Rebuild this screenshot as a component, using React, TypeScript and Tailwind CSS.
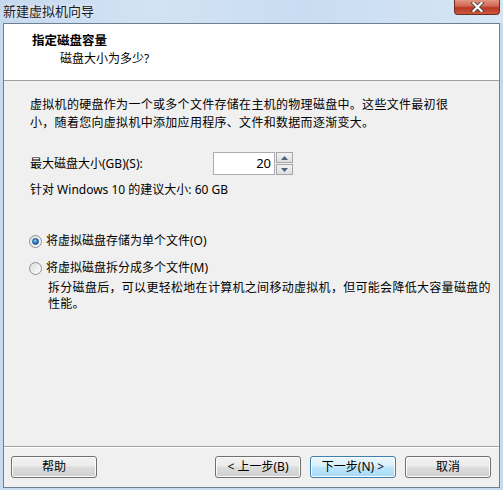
import React from "react";

const font = "font-['Noto_Sans','Noto_Sans_CJK_SC',sans-serif]";

const Button = ({ label, primary }: { label: string; primary?: boolean }) => (
  <div
    className={`w-[86px] h-[22px] rounded-[3px] border flex items-center justify-center text-[12px] leading-none text-black ${
      primary
        ? "border-[#3c7fb1] bg-[linear-gradient(#eaf6fd_0%,#d9f0fc_45%,#bee6fd_50%,#a7d9f5_100%)] shadow-[inset_0_0_0_1px_#fbfdfe]"
        : "border-[#707070] bg-[linear-gradient(#f2f2f2_0%,#ebebeb_45%,#dddddd_50%,#cfcfcf_100%)] shadow-[inset_0_0_0_1px_#fcfcfc]"
    }`}
  >
    {label}
  </div>
);

const Radio = ({ checked }: { checked?: boolean }) => (
  <div className="w-[13px] h-[13px] rounded-full border border-[#8e8f8f] bg-[linear-gradient(135deg,#dcdcdc,#ffffff)] flex items-center justify-center">
    {checked && (
      <div className="w-[7px] h-[7px] rounded-full bg-[radial-gradient(circle_at_40%_35%,#8ed0fa,#1c6fc1_60%,#0f4f9a)] border border-[#1b4f86]" />
    )}
  </div>
);

export default function App() {
  return (
    <div className={`w-[503px] h-[490px] flex flex-col bg-[#c7daf0] ${font} text-[12px] text-black`}>
      {/* title bar */}
      <div className="h-[23px] flex items-start justify-between bg-[linear-gradient(90deg,#c3d7ee,#d3e3f5_30%,#c9dcf1_60%,#d6e6f6)]">
        <div className="pl-[3px] pt-[2px] text-[13px] leading-[18px] text-[#1b1b1b] [text-shadow:0_0_6px_#ffffff]">
          新建虚拟机向导
        </div>
        <div className="mr-[3px] w-[46px] h-[15px] rounded-b-[4px] border border-t-0 border-[#6d2d22] bg-[linear-gradient(#e29684_0%,#cf654f_45%,#b8371f_55%,#cc5840_100%)] flex items-center justify-center">
          <svg width="13" height="10" viewBox="0 0 13 10">
            <path d="M2.5 1 L10.5 9 M10.5 1 L2.5 9" stroke="#3a3a3a" strokeWidth="3.8" strokeLinecap="square" />
            <path d="M2.5 1 L10.5 9 M10.5 1 L2.5 9" stroke="#ffffff" strokeWidth="2.2" strokeLinecap="square" />
          </svg>
        </div>
      </div>

      {/* client area */}
      <div className="flex-1 mx-[3px] mb-[2px] border border-[#6f7f92] bg-[#f0f0f0] flex flex-col">
        <div className="h-[57px] bg-white border-b border-[#a0a0a0] pl-[28px] pt-[8px]">
          <div className="font-bold text-[12.5px] leading-[18px]">指定磁盘容量</div>
          <div className="pl-[28px] leading-[17px]">磁盘大小为多少?</div>
        </div>

        <div className="flex-1 pl-[26px] pt-[15px] flex flex-col">
          <div className="leading-[18px] tracking-[0.3px]">
            <div>虚拟机的硬盘作为一个或多个文件存储在主机的物理磁盘中。这些文件最初很</div>
            <div>小，随着您向虚拟机中添加应用程序、文件和数据而逐渐变大。</div>
          </div>

          <div className="mt-[20px] flex items-center h-[23px]">
            <div className="w-[183px] leading-[18px]">最大磁盘大小(GB)(S):</div>
            <div className="w-[62px] h-[23px] bg-white border border-[#abadb3] flex items-center justify-end pr-[3px] text-[13px]">
              20
            </div>
            <div className="ml-[1px] w-[17px] h-[23px] flex flex-col gap-[1px]">
              <div className="flex-1 border border-[#a6a6a6] bg-[linear-gradient(#f3f3f3,#dedede)] flex items-center justify-center">
                <svg width="7" height="4" viewBox="0 0 7 4"><path d="M3.5 0 L7 4 L0 4 Z" fill="#4c607f" /></svg>
              </div>
              <div className="flex-1 border border-[#a6a6a6] bg-[linear-gradient(#f3f3f3,#dedede)] flex items-center justify-center">
                <svg width="7" height="4" viewBox="0 0 7 4"><path d="M0 0 L7 0 L3.5 4 Z" fill="#4c607f" /></svg>
              </div>
            </div>
          </div>

          <div className="mt-[6px] leading-[18px]">针对 Windows 10 的建议大小: 60 GB</div>

          <div className="mt-[33px] flex items-center gap-[4px] -ml-[1px]">
            <Radio checked />
            <span className="leading-[18px]">将虚拟磁盘存储为单个文件(O)</span>
          </div>
          <div className="mt-[9px] flex items-center gap-[4px] -ml-[1px]">
            <Radio />
            <span className="leading-[18px]">将虚拟磁盘拆分成多个文件(M)</span>
          </div>
          <div className="mt-[3px] pl-[18px] leading-[16px] tracking-[0.3px]">
            <div>拆分磁盘后，可以更轻松地在计算机之间移动虚拟机，但可能会降低大容量磁盘的</div>
            <div>性能。</div>
          </div>
        </div>

        <div className="h-[2px] border-t border-[#a0a0a0] border-b border-b-white" />
        <div className="h-[39px] flex items-center pl-[7px] pr-[8px] pb-[2px]">
          <Button label="帮助" />
          <div className="flex-1" />
          <div className="flex gap-[9px]">
            <Button label="< 上一步(B)" />
            <Button label="下一步(N) >" primary />
            <Button label="取消" />
          </div>
        </div>
      </div>
    </div>
  );
}
